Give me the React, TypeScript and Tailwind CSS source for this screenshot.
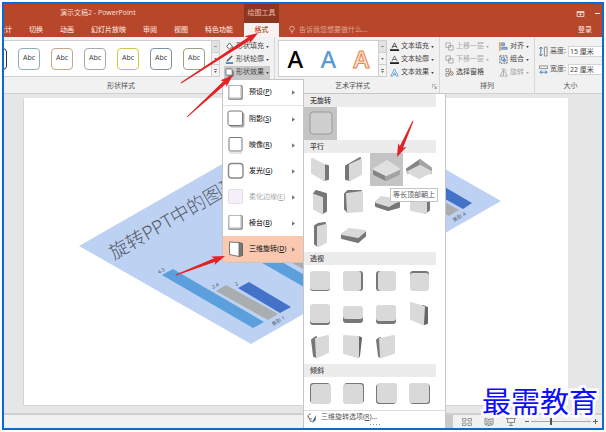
import type { ReactNode } from "react";

type Point = [number, number];

const LIGHT = "#d9d9d9";
const DARK = "#777777";

const tabs = ["设计", "切换", "动画", "幻灯片放映", "审阅", "视图", "特色功能"];

const shapeStyles = [
  "border-[#333333]",
  "border-[#8fb0b5]",
  "border-[#c3a88a]",
  "border-[#a9a9a9]",
  "border-[#cfc93f]",
  "border-[#7d93a8]",
  "border-[#94a583]",
];

const pts = (points: Point[]) => points.map((p) => p.join(",")).join(" ");

const Face = ({ points, color = LIGHT }: { points: Point[]; color?: string }) => (
  <polygon
    points={pts(points)}
    fill={color}
    stroke={color}
    strokeWidth="2"
    strokeLinejoin="round"
  />
);

const Plate = ({
  x = 6,
  y = 6,
  w = 20,
  h = 20,
  dx = 0,
  dy = 0,
}: {
  x?: number;
  y?: number;
  w?: number;
  h?: number;
  dx?: number;
  dy?: number;
}) => (
  <>
    <rect x={x + dx} y={y + dy} width={w} height={h} rx="3" fill={DARK} />
    <rect x={x} y={y} width={w} height={h} rx="3" fill={LIGHT} />
  </>
);

const parallel: { name: string; art: ReactNode }[] = [
  {
    name: "等轴左下",
    art: (
      <>
        <Face color={DARK} points={[[19, 12], [24, 13], [24, 26], [20, 27]]} />
        <Face points={[[8, 6], [20, 12], [20, 27], [8, 20]]} />
      </>
    ),
  },
  {
    name: "等轴右上",
    art: (
      <>
        <Face color={DARK} points={[[9, 13], [23, 5], [13, 27], [9, 26]]} />
        <Face points={[[13, 12], [24, 7], [24, 21], [13, 27]]} />
      </>
    ),
  },
  {
    name: "等长顶部朝上",
    art: (
      <>
        <Face color="#858585" points={[[4, 17], [16, 22], [16, 27], [4, 21]]} />
        <Face color="#a3a3a3" points={[[16, 22], [29, 17], [29, 21], [16, 27]]} />
        <Face color="#e0e0e0" points={[[17, 8], [29, 16], [16, 22], [4, 16]]} />
      </>
    ),
  },
  {
    name: "等长底部朝下",
    art: (
      <>
        <Face color="#858585" points={[[17, 7], [17, 12], [5, 20], [4, 16]]} />
        <Face color="#a3a3a3" points={[[17, 7], [28, 15], [28, 20], [17, 13]]} />
        <Face points={[[17, 13], [28, 19], [16, 25], [5, 19]]} />
      </>
    ),
  },
  {
    name: "离轴1左",
    art: (
      <>
        <Face color={DARK} points={[[10, 8], [12, 5], [22, 8], [22, 25], [18, 27]]} />
        <Face points={[[10, 9], [18, 12], [18, 27], [10, 23]]} />
      </>
    ),
  },
  {
    name: "离轴1右",
    art: (
      <>
        <Face color={DARK} points={[[8, 8], [11, 5], [24, 5], [11, 26], [8, 23]]} />
        <Face points={[[10, 8], [25, 6], [25, 25], [11, 26]]} />
      </>
    ),
  },
  {
    name: "离轴1上",
    art: (
      <>
        <Face color={DARK} points={[[6, 16], [19, 20], [29, 17], [29, 21], [18, 24], [6, 20]]} />
        <Face points={[[11, 11], [29, 14], [19, 20], [6, 16]]} />
      </>
    ),
  },
  {
    name: "离轴2左",
    art: (
      <>
        <Face color={DARK} points={[[22, 8], [26, 10], [26, 24], [22, 27]]} />
        <Face points={[[8, 7], [23, 8], [23, 27], [8, 24]]} />
      </>
    ),
  },
  {
    name: "离轴2右",
    art: (
      <>
        <Face color={DARK} points={[[11, 7], [14, 5], [21, 4], [14, 27], [11, 25]]} />
        <Face points={[[14, 8], [22, 6], [22, 23], [14, 27]]} />
      </>
    ),
  },
  {
    name: "离轴2上",
    art: (
      <>
        <Face color={DARK} points={[[5, 15], [21, 18], [28, 13], [28, 17], [21, 23], [5, 19]]} />
        <Face points={[[12, 10], [28, 12], [21, 18], [5, 15]]} />
      </>
    ),
  },
];

const perspective: { name: string; art: ReactNode }[] = [
  { name: "前透视", art: <Plate y={6} h={19} dy={1} /> },
  { name: "左透视", art: <Plate w={18} dx={2} /> },
  { name: "右透视", art: <Plate x={8} w={18} dx={-2} /> },
  { name: "下透视", art: <Plate x={7} y={8} w={19} h={18} dy={-2} /> },
  { name: "上透视", art: <Plate h={19} dy={2} /> },
  { name: "宽松透视", art: <Plate y={8} h={13} dy={4} /> },
  { name: "适度宽松透视", art: <Plate y={7} h={16} dy={3} /> },
  {
    name: "极左透视",
    art: (
      <>
        <Face color="#666666" points={[[20, 8], [24, 10], [24, 25], [21, 26]]} />
        <Face points={[[8, 5], [21, 9], [20, 26], [8, 21]]} />
      </>
    ),
  },
  {
    name: "极右透视",
    art: (
      <>
        <Face color={DARK} points={[[8, 9], [12, 6], [13, 26], [10, 25]]} />
        <Face points={[[12, 8], [24, 5], [24, 21], [13, 26]]} />
      </>
    ),
  },
  {
    name: "左向对比透视",
    art: (
      <>
        <Face color="#666666" points={[[21, 6], [24, 7], [22, 25], [21, 26]]} />
        <Face points={[[7, 5], [21, 6], [21, 26], [7, 22]]} />
      </>
    ),
  },
  {
    name: "右向对比透视",
    art: (
      <>
        <Face color={DARK} points={[[7, 9], [10, 7], [11, 26], [9, 25]]} />
        <Face points={[[10, 8], [24, 5], [24, 22], [11, 26]]} />
      </>
    ),
  },
];

const oblique: { name: string; art: ReactNode }[] = [
  { name: "左上倾斜", art: <Plate x={7} y={7} dx={-1} dy={-1} /> },
  { name: "右上倾斜", art: <Plate x={6} y={7} dx={1} dy={-1} /> },
  { name: "左下倾斜", art: <Plate x={7} y={6} dx={-1} dy={1} /> },
  { name: "右下倾斜", art: <Plate x={6} y={6} dx={1} dy={1} /> },
];

const effects = [
  { label: "预设", hotkey: "P", icon: "preset" },
  { label: "阴影", hotkey: "S", icon: "shadow" },
  { label: "映像", hotkey: "R", icon: "reflect" },
  { label: "发光", hotkey: "G", icon: "glow" },
  { label: "柔化边缘", hotkey: "E", icon: "soft" },
  { label: "棱台", hotkey: "B", icon: "bevel" },
  { label: "三维旋转", hotkey: "D", icon: "rotate" },
];

const EffectIcon = ({ kind }: { kind: string }) => (
  <svg viewBox="0 0 18 18" className="h-[18px] w-[18px] shrink-0">
    {(kind === "preset" || kind === "bevel") && (
      <>
        <rect x="1" y="1" width="15" height="15" rx="2" fill="#9a9a9a" />
        <rect x="1.5" y="1.5" width="13" height="13" rx="2" fill="#d9d9d9" />
        <rect x="3" y="2" width="10" height="11" rx="1" fill="#fff" />
      </>
    )}
    {kind === "shadow" && (
      <>
        <rect x="2.5" y="2.5" width="15" height="15" rx="2" fill="#b0b0b0" />
        <rect x="1" y="1" width="14.5" height="14.5" rx="2" fill="#fff" stroke="#777" />
      </>
    )}
    {kind === "reflect" && (
      <>
        <rect x="2" y="1.5" width="13" height="13.5" rx="1" fill="#fff" stroke="#777" />
        <path d="M2 17h13" stroke="#ccc" />
      </>
    )}
    {kind === "glow" && (
      <rect x="1.5" y="1.5" width="14.5" height="14.5" rx="3" fill="#fff" stroke="#888" strokeWidth="1.4" />
    )}
    {kind === "soft" && (
      <rect x="1.5" y="1.5" width="14" height="14" rx="1" fill="#f5f0f7" stroke="#e3dbe6" />
    )}
    {kind === "rotate" && (
      <>
        <path d="M12 2.500l3.500 1v12l-3.500 1z" fill="#777" stroke="#666" strokeLinejoin="round" />
        <path d="M2.500 2L12 2.500v14L2.500 14.500z" fill="#fff" stroke="#777" strokeLinejoin="round" />
      </>
    )}
  </svg>
);

const EffectsMenu = () => (
  <div className="absolute left-[218px] top-[75px] w-[82px] border border-[#c6c6c6] bg-white">
    {effects.map(({ label, hotkey, icon }) => (
      <button
        key={hotkey}
        type="button"
        disabled={icon === "soft"}
        className={`flex h-[26px] w-full items-center gap-1 px-1 text-[7px] font-medium text-[#333] disabled:font-normal disabled:text-[#aaa] ${
          icon === "rotate" ? "bg-[#fac8ae]" : "bg-white"
        } ${icon === "preset" ? "border-b border-[#e1e1e1]" : ""}`}
      >
        <EffectIcon kind={icon} />
        <span className="whitespace-nowrap">
          {label}(<u>{hotkey}</u>)
        </span>
        <svg viewBox="0 0 4 6" className="ml-auto mr-1 h-[5px] w-[3px] shrink-0">
          <path d="M0 0l4 3-4 3z" fill="#777" />
        </svg>
      </button>
    ))}
  </div>
);

const Group = ({ title, children }: { title: string; children: ReactNode }) => (
  <section>
    <h3 className="mr-[9px] h-[13px] bg-[#ececec] pl-1.5 text-[7px] font-medium leading-[13px] text-[#444]">
      {title}
    </h3>
    <div className="grid grid-cols-[repeat(4,33px)]">{children}</div>
  </section>
);

const Cell = ({ name, art, active }: { name: string; art: ReactNode; active?: boolean }) => (
  <button
    type="button"
    aria-label={name}
    className={`h-[33px] w-[33px] ${active ? "bg-[#c4c4c4]" : "bg-white"}`}
  >
    <svg viewBox="0 0 33 33" className="block h-[33px] w-[33px]">
      {art}
    </svg>
  </button>
);

const RotationGallery = () => (
  <div className="absolute left-[299px] top-[89px] w-[143px] border border-[#c6c6c6] bg-white">
    <Group title="无旋转">
      <Cell
        name="无旋转"
        active
        art={<rect x="6" y="5" width="22" height="22" rx="3" fill="#cfcfcf" stroke="#999" />}
      />
    </Group>
    <Group title="平行">
      {parallel.map((item) => (
        <Cell key={item.name} {...item} active={item.name === "等长顶部朝上"} />
      ))}
    </Group>
    <Group title="透视">
      {perspective.map((item) => (
        <Cell key={item.name} {...item} />
      ))}
    </Group>
    <Group title="倾斜">
      {oblique.map((item) => (
        <Cell key={item.name} {...item} />
      ))}
    </Group>
    <button
      type="button"
      className="flex h-3.5 w-full items-center gap-1 border-t border-[#dcdcdc] px-[3px] text-[7px] text-[#555]"
    >
      <svg viewBox="0 0 10 10" className="h-2.5 w-2.5">
        <path d="M4 1a2.5 2.5 0 1 0 1 4.5M1 3l3 6M4 8l2 1" fill="none" stroke="#777" />
        <path d="M9 2L6.5 6.500l-1 3 3-2z" fill="#35618f" />
      </svg>
      <span>
        三维旋转选项(<u>R</u>)...
      </span>
    </button>
    <div className="flex justify-center gap-0.5 pb-1">
      {[0, 1, 2, 3].map((dot) => (
        <span key={dot} className="h-px w-px bg-[#888]" />
      ))}
    </div>
  </div>
);

const Caret = () => (
  <svg viewBox="0 0 4 3" className="h-[2px] w-[3px] shrink-0">
    <path d="M0 0h4L2 3z" fill="currentColor" />
  </svg>
);

const Tool = ({
  icon,
  label,
  muted,
  active,
  menu = true,
}: {
  icon: ReactNode;
  label: string;
  muted?: boolean;
  active?: boolean;
  menu?: boolean;
}) => (
  <button
    type="button"
    className={`flex h-[13px] items-center gap-0.5 whitespace-nowrap px-px text-[7px] ${
      muted ? "text-[#a8a8a8]" : "text-[#444]"
    } ${active ? "bg-[#c8c8c8]" : ""}`}
  >
    <svg viewBox="0 0 10 10" className="h-[9px] w-[9px] shrink-0">
      {icon}
    </svg>
    {label}
    {menu && <Caret />}
  </button>
);

const Scroller = () => (
  <div className="flex w-2 shrink-0 flex-col border-l border-[#cfcfcf] bg-[#f3f3f3] text-[#666]">
    <span className="flex flex-1 items-center justify-center bg-[#e2e2e2]">
      <span className="h-px w-[3px] bg-[#999]" />
    </span>
    <span className="flex flex-1 items-center justify-center border-y border-[#cfcfcf]">
      <Caret />
    </span>
    <span className="flex flex-1 flex-col items-center justify-center gap-px">
      <span className="h-px w-[3px] bg-[#777]" />
      <Caret />
    </span>
  </div>
);

const stackIcon = (
  <path d="M1 1h5v5H1zM4 4h5v5H4z" fill="#f1f1f1" stroke="#a8a8a8" />
);

const Ribbon = () => (
  <div className="flex h-[57px] shrink-0 border-b border-[#d0d0d0] bg-[#f1f1f1] text-[#555]">
    <section className="flex w-[271px] shrink-0 flex-col border-r border-[#d8d8d8]">
      <div className="flex gap-1 pt-[3px]">
        <div className="flex h-[37px] w-[216px] border border-l-0 border-[#cfcfcf] bg-white">
          <div className="flex flex-1 items-center justify-end gap-[11px] overflow-hidden pr-1.5">
            {shapeStyles.map((style) => (
              <button
                key={style}
                type="button"
                className={`h-[22px] w-[22px] shrink-0 rounded border text-[7px] text-[#444] ${style}`}
              >
                Abc
              </button>
            ))}
          </div>
          <Scroller />
        </div>
        <div className="flex flex-col">
          <Tool
            label="形状填充"
            icon={
              <>
                <path d="M2 5l3-4 3 4-3 3z" fill="#fff" stroke="#555" />
                <path d="M8 4c2 2 1.500 4 0 4z" fill="#3b78b8" />
              </>
            }
          />
          <Tool
            label="形状轮廓"
            icon={
              <>
                <path d="M1 9h8" stroke="#4d82bd" strokeWidth="2" />
                <path d="M2 7l6-6" stroke="#555" strokeWidth="1.500" />
              </>
            }
          />
          <Tool
            label="形状效果"
            active
            icon={
              <>
                <rect x="3" y="3" width="7" height="7" rx="1" fill="#888" />
                <rect x="1" y="1" width="7" height="7" rx="1" fill="#fff" stroke="#666" />
              </>
            }
          />
        </div>
      </div>
      <div className="pr-9 text-center text-[7px] leading-[14px]">形状样式</div>
    </section>

    <section className="flex w-[165px] shrink-0 flex-col border-r border-[#d8d8d8]">
      <div className="flex gap-0.5 pl-[3px] pt-[3px]">
        <div className="flex h-[37px] w-[109px] border border-[#cfcfcf] bg-white">
          <div className="flex flex-1 items-center justify-around font-['Noto_Sans'] text-2xl font-medium">
            <span className="text-black">A</span>
            <span className="text-[#5b9bd5]">A</span>
            <span className="font-semibold text-[#fbe0cc] [-webkit-text-stroke:1px_#e5864a]">A</span>
          </div>
          <Scroller />
        </div>
        <div className="flex flex-col">
          <Tool
            label="文本填充"
            icon={
              <>
                <path d="M2 7l3-6 3 6M3 5h4" fill="none" stroke="#444" />
                <path d="M0 9h10" stroke="#222" strokeWidth="2" />
              </>
            }
          />
          <Tool
            label="文本轮廓"
            icon={
              <>
                <path d="M2 7l3-6 3 6M3 5h4" fill="none" stroke="#666" />
                <path d="M0 9h10" stroke="#222" strokeWidth="2" />
              </>
            }
          />
          <Tool
            label="文本效果"
            icon={
              <path d="M1 9l4-8 4 8H7L5 5 3 9zM4 7h2" fill="#fff" stroke="#5b9bd5" />
            }
          />
        </div>
      </div>
      <div className="flex items-center px-0.5 text-[7px] leading-[14px]">
        <span className="flex-1 pr-1 text-center">艺术字样式</span>
        <svg viewBox="0 0 6 6" className="h-[5px] w-[5px]">
          <path d="M0 5V0h5M2 2l3 3M5 3v2.500H3" fill="none" stroke="#888" />
        </svg>
      </div>
    </section>

    <section className="flex w-[95px] shrink-0 flex-col border-r border-[#d8d8d8]">
      <div className="flex justify-between pl-1 pr-1 pt-[3px]">
        <div className="flex flex-col">
          <Tool label="上移一层" muted icon={stackIcon} />
          <Tool label="下移一层" muted icon={stackIcon} />
          <Tool
            label="选择窗格"
            menu={false}
            icon={
              <>
                <path d="M1 1h3v3H1zM1 6h3v3H1z" fill="#fff" stroke="#888" />
                <path d="M6 0v5M5 4l4 4" stroke="#e08a3c" />
                <circle cx="7" cy="6" r="2" fill="none" stroke="#777" />
              </>
            }
          />
        </div>
        <div className="flex flex-col">
          <Tool
            label="对齐"
            icon={
              <>
                <path d="M1 0v10" stroke="#e08a3c" strokeWidth="1.500" />
                <path d="M3 1h3v3H3zM3 6h6v2H3z" fill="#9cc0e4" stroke="#5a86b5" />
              </>
            }
          />
          <Tool
            label="组合"
            icon={
              <>
                <path d="M1 1h8v8H1z" fill="none" stroke="#555" strokeDasharray="2 1" />
                <path d="M3 3h3v3H3zM5 5h2v2H5z" fill="#fff" stroke="#4d82bd" />
              </>
            }
          />
          <Tool
            label="旋转"
            muted
            icon={<path d="M1 9h4V2zM6 9h3L6 3M3 1h3l2 2" fill="none" stroke="#a8a8a8" />}
          />
        </div>
      </div>
      <div className="text-center text-[7px] leading-[14px]">排列</div>
    </section>

    <section className="flex min-w-0 flex-1 flex-col">
      <div className="flex h-[42px] flex-col justify-center gap-[7px] pl-1 pt-1 text-[7px]">
        <label className="flex items-center gap-0.5 whitespace-nowrap">
          <svg viewBox="0 0 10 12" className="h-[11px] w-[9px] shrink-0">
            <path d="M2 1v10M0 3l2-2 2 2M0 9l2 2 2-2" fill="none" stroke="#3f78b5" />
            <path d="M6 1h3v10H6z" fill="none" stroke="#888" />
          </svg>
          高度:
          <input
            defaultValue="15 厘米"
            className="h-[11px] min-w-0 flex-1 border border-r-0 border-[#d5d5d5] bg-white pl-px text-[#444]"
          />
        </label>
        <label className="flex items-center gap-0.5 whitespace-nowrap">
          <svg viewBox="0 0 10 10" className="h-[9px] w-[9px] shrink-0">
            <path d="M0.500 1h9v3h-9z" fill="none" stroke="#888" />
            <path d="M1 8h8M3 6L1 8l2 2M7 6l2 2-2 2" fill="none" stroke="#3f78b5" />
          </svg>
          宽度:
          <input
            defaultValue="22 厘米"
            className="h-[11px] min-w-0 flex-1 border border-r-0 border-[#d5d5d5] bg-white pl-px text-[#444]"
          />
        </label>
      </div>
      <div className="pl-1 text-center text-[7px] leading-[14px]">大小</div>
    </section>
  </div>
);

const Header = () => (
  <header className="shrink-0 bg-[#b7472a] text-[7px] text-[#f7ddd5]">
    <div className="flex h-[19px] items-center">
      <h1 className="w-[240px] pl-14 font-normal">演示文稿2 - PowerPoint</h1>
      <span className="flex h-full w-[35px] items-center justify-center bg-[#8c3520] text-[#eeb9aa]">
        绘图工具
      </span>
      <div className="ml-auto flex items-center gap-2.5 pr-0.5">
        <svg viewBox="0 0 10 8" className="h-[6px] w-[9px]">
          <path d="M.5.5h9v7h-9zM.5 2h9M5 6V3.500M3.500 5L5 3.500 6.500 5" fill="none" stroke="#fff" />
        </svg>
        <span className="h-px w-[5px] bg-white" />
      </div>
    </div>
    <nav className="flex h-[14px] items-center">
      <div className="flex w-[240px] gap-[17px] overflow-hidden whitespace-nowrap font-medium">
        {tabs.map((tab) => (
          <a key={tab} href="#" className="shrink-0 first:-ml-1.5">
            {tab}
          </a>
        ))}
      </div>
      <a
        href="#"
        className="flex h-full w-[35px] items-center justify-center bg-[#f7f3f2] font-medium text-[#c0492b]"
      >
        格式
      </a>
      <div className="ml-2.5 flex items-center gap-1 text-[#dfa493]">
        <svg viewBox="0 0 8 10" className="h-[8px] w-[6px]">
          <path d="M3 7C3 5 1 5 1 3a3 3 0 0 1 6 0c0 2-2 2-2 4zM3 9h2" fill="none" stroke="#f3cfc4" />
        </svg>
        告诉我您想要做什么...
      </div>
      <a href="#" className="ml-auto pr-2.5 font-medium">
        登录
      </a>
    </nav>
  </header>
);

const Slide = () => (
  <main className="min-h-0 flex-1 border-b-2 border-[#cfcfcf] bg-[#e6e6e6] pb-2 pl-5 pr-[34px] pt-1">
    <div className="h-full overflow-hidden bg-white shadow-[-1px_1px_0_#d4d4d4]">
      <svg
        viewBox="24 98 544 307"
        preserveAspectRatio="xMinYMin meet"
        className="h-full w-full"
        fontFamily="'Noto Sans', 'Noto Sans CJK SC', sans-serif"
      >
        <polygon points="79,246 329,103 501,201 251,344" fill="#bdd1f3" />
        <polygon points="162,275 173,269 264,322 253,328" fill="#5b9fdc" />
        <polygon points="216,291 226,285 278,314 268,320" fill="#a9adad" />
        <polygon points="238,288 249,282 291,307 280,313" fill="#4472c8" />
        <polygon points="250,256 261,250 315,281 304,287" fill="#5b9fdc" />
        <polygon points="280,256 290,250 320,267 310,273" fill="#a9adad" />
        <polygon points="420,185 431,179 472,203 463,209" fill="#4472c8" />
        <polygon points="420,199 431,194 459,210 449,216" fill="#a9adad" />
        <g fill="#555b66">
          <text transform="translate(114 260) rotate(-30)" fontSize="19" fontWeight="300">
            旋转PPT中的图形
          </text>
          <g fontSize="5">
            <text transform="translate(159 274) rotate(-30)">4.3</text>
            <text transform="translate(213 289) rotate(-30)">2.4</text>
            <text transform="translate(236 286) rotate(-30)">2</text>
            <text transform="translate(273 326) rotate(-30)">类别 1</text>
            <text transform="translate(454 222) rotate(-30)">类别 4</text>
          </g>
        </g>
      </svg>
    </div>
  </main>
);

const StatusBar = () => (
  <footer className="flex h-[13px] shrink-0 items-center justify-end gap-[9px] bg-[#f1f1f1] pr-1 text-[#777]">
    <button type="button" aria-label="普通视图" className="h-full w-3 bg-[#c9c9c9]" />
    <button type="button" aria-label="幻灯片浏览">
      <svg viewBox="0 0 10 8" className="h-2 w-2.5">
        <path d="M.5.5h3.500v2.500H.5zM6 .5h3.500v2.500H6zM.5 5h3.500v2.500H.5zM6 5h3.500v2.500H6z" fill="none" stroke="#999" />
      </svg>
    </button>
    <button type="button" aria-label="阅读视图" className="ml-[3px]">
      <svg viewBox="0 0 10 8" className="h-2 w-2.5">
        <path d="M5 1.500L1 .5v6l4 1 4-1v-6zM5 1.500v6M2 3l2 .5M2 5l2 .5M8 3l-2 .5M8 5l-2 .5" fill="none" stroke="#888" />
      </svg>
    </button>
    <button type="button" aria-label="幻灯片放映" className="ml-[3px]">
      <svg viewBox="0 0 10 8" className="h-2 w-2.5">
        <path d="M0 .5h10M1.500 1v3.500h7V1M5 4.500v3M3 7.500h4" fill="none" stroke="#888" />
      </svg>
    </button>
    <div className="flex items-center gap-0.5">
      <span className="h-px w-1 bg-[#666]" />
      <input
        type="range"
        aria-label="缩放"
        defaultValue={33}
        className="h-[7px] w-[60px] appearance-none bg-[linear-gradient(#aaa,#aaa)] bg-[length:100%_1px] bg-center bg-no-repeat [&::-webkit-slider-thumb]:h-[7px] [&::-webkit-slider-thumb]:w-0.5 [&::-webkit-slider-thumb]:appearance-none [&::-webkit-slider-thumb]:bg-[#555]"
      />
      <svg viewBox="0 0 5 5" className="h-[5px] w-[5px]">
        <path d="M0 2.500h5M2.500 0v5" stroke="#666" />
      </svg>
    </div>
  </footer>
);

const Arrow = ({ from, to }: { from: Point; to: Point }) => {
  const dx = to[0] - from[0];
  const dy = to[1] - from[1];
  const len = Math.hypot(dx, dy);
  const ux = dx / len;
  const uy = dy / len;
  // along = distance back from the tip, side = distance off the shaft
  const at = (along: number, side: number): Point => [
    to[0] - ux * along - uy * side,
    to[1] - uy * along + ux * side,
  ];
  return (
    <polygon
      points={pts([at(len, 0.5), at(11, 1.8), at(13, 4.5), to, at(13, -4.5), at(11, -1.8), at(len, -0.5)])}
      fill="#e32226"
    />
  );
};

export default function App() {
  return (
    <div className="h-screen w-full bg-white p-0.5 font-['Noto_Sans','Noto_Sans_CJK_SC',sans-serif]">
      <div className="relative flex h-full flex-col overflow-hidden border-2 border-[#0a6cd2]">
        <Header />
        <Ribbon />
        <Slide />
        <StatusBar />

        <EffectsMenu />
        <RotationGallery />
        <div
          role="tooltip"
          className="absolute left-[386px] top-[184px] border border-[#c4c4c4] bg-white px-0.5 text-[7px] leading-[12px] text-[#555]"
        >
          等长顶部朝上
        </div>

        <svg
          viewBox="4 4 598 424"
          className="pointer-events-none absolute left-0 top-0 h-[424px] w-[598px]"
        >
          <Arrow from={[181, 83]} to={[258, 33]} />
          <Arrow from={[187, 117]} to={[233, 75]} />
          <Arrow from={[413, 121]} to={[397, 157]} />
          <Arrow from={[176, 275]} to={[225, 256]} />
        </svg>

        <div className="absolute bottom-1 right-1 font-['Noto_Sans_CJK_SC',sans-serif] text-[29px] leading-[48px] text-[#0d0dff] [-webkit-text-stroke:5px_white] [paint-order:stroke_fill]">
          最需教育
        </div>
      </div>
    </div>
  );
}
